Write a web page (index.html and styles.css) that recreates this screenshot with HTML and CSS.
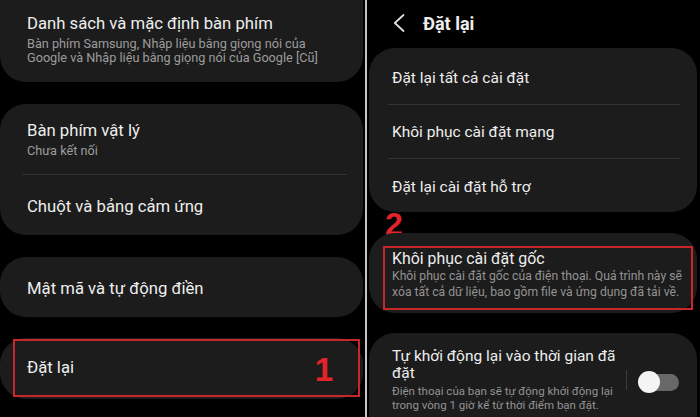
FILE: index.html
```html
<!DOCTYPE html>
<html lang="vi">
<head>
<meta charset="utf-8">
<title>Đặt lại</title>
<link rel="stylesheet" href="styles.css">
</head>
<body>
<div class="screen">
  <div class="panel left">
    <div class="card c1">
      <div class="title">Danh sách và mặc định bàn phím</div>
      <div class="sub">Bàn phím Samsung, Nhập liệu bằng giọng nói của<br>Google và Nhập liệu bằng giọng nói của Google [Cũ]</div>
    </div>
    <div class="card c2">
      <div class="item top-item">
        <div class="title">Bàn phím vật lý</div>
        <div class="sub">Chưa kết nối</div>
      </div>
      <div class="divider ldiv"></div>
      <div class="item single">
        <div class="title">Chuột và bảng cảm ứng</div>
      </div>
    </div>
    <div class="card c3">
      <div class="item single">
        <div class="title">Mật mã và tự động điền</div>
      </div>
    </div>
    <div class="card c4">
      <div class="hl hl1">
        <div class="title">Đặt lại</div>
        <div class="num n1">1</div>
      </div>
    </div>
  </div>
  <div class="sep"></div>
  <div class="panel right">
    <div class="header">
      <svg class="back" width="12" height="18" viewBox="0 0 12 18"><polyline points="10.5,1 1.8,9 10.5,17" fill="none" stroke="#e2e2e2" stroke-width="1.7" stroke-linecap="round" stroke-linejoin="round"/></svg>
      <span class="htitle">Đặt lại</span>
    </div>
    <div class="card ca">
      <div class="row r1"><span class="rtitle">Đặt lại tất cả cài đặt</span></div>
      <div class="divider rdiv"></div>
      <div class="row r2"><span class="rtitle">Khôi phục cài đặt mạng</span></div>
      <div class="divider rdiv"></div>
      <div class="row r3"><span class="rtitle">Đặt lại cài đặt hỗ trợ</span></div>
    </div>
    <div class="num n2">2</div>
    <div class="card cb">
      <div class="hl hl2">
        <div class="rtitle btitle">Khôi phục cài đặt gốc</div>
        <div class="rsub bsub">Khôi phục cài đặt gốc của điện thoại. Quá trình này sẽ<br>xóa tất cả dữ liệu, bao gồm file và ứng dụng đã tải về.</div>
      </div>
    </div>
    <div class="card cc">
      <div class="trow">
        <div class="ttext">
          <div class="rtitle tt">Tự khởi động lại vào thời gian đã<br>đặt</div>
          <div class="rsub ts">Điện thoại của bạn sẽ tự động khởi động lại<br>trong vòng 1 giờ kể từ thời điểm bạn đặt.</div>
        </div>
        <div class="vline"></div>
        <div class="toggle"><span class="track"></span><span class="knob"></span></div>
      </div>
    </div>
  </div>
</div>
</body>
</html>
```
FILE: styles.css
```css
* { box-sizing: border-box; }
html, body { margin: 0; padding: 0; background: #000; }
body { font-family: Roboto, "Noto Sans", "Liberation Sans", sans-serif; color: #ededed; }
.screen { width: 700px; height: 417px; display: flex; overflow: hidden; background: #000; }
.panel { height: 417px; overflow: hidden; display: flex; flex-direction: column; }
.left { width: 365px; }
.sep { width: 2px; height: 417px; background: #c4c4c4; flex: none; }
.right { flex: 1; padding: 0 3px 0 2px; }

.card { background: #1c1c1c; border-radius: 26px; flex: none; }
.left .card { margin-right: 2px; }

.title { font-size: 16.7px; line-height: 22px; color: #eeeeee; }
.sub { font-size: 12.7px; line-height: 14px; color: #9c9c9c; margin-top: 2px; }

.c1 { margin-top: -30px; padding: 43px 20px 17px 27px; }
.c2 { margin-top: 22px; }
.top-item { padding: 16px 27px 16px; }
.ldiv { margin: 0 16px 0 22px; }
.single { padding: 21px 27px 17px; }
.c3 { margin-top: 22px; }
.c4 { margin-top: 21px; padding: 1px 3px 2px 13px; }

.divider { height: 1px; background: #333333; }

.hl { border: 2px solid #c8262c; }
.hl1 { height: 58px; display: flex; align-items: center; justify-content: space-between; padding: 0 25px 0 12px; }
.num { color: #e3232a; font-weight: 700; font-family: "Liberation Sans", Arial, sans-serif; }
.n1 { font-size: 33px; line-height: 33px; padding-top: 2px; }

.header { height: 48px; display: flex; align-items: center; padding-left: 24px; padding-bottom: 2px; flex: none; }
.back { display: block; }
.htitle { margin-left: 18px; font-size: 18px; font-weight: 700; color: #eeeeee; }

.rtitle { font-size: 15.5px; line-height: 20px; color: #eeeeee; }
.rsub { font-size: 11.5px; line-height: 15.5px; color: #939393; }
.btitle { font-size: 15.9px; }
.bsub { font-size: 12.2px; white-space: nowrap; }
.row { display: flex; align-items: center; padding-left: 23px; }
.r1 { height: 56px; padding-top: 3px; }
.r2 { height: 53px; }
.r3 { height: 53px; padding-top: 3px; }
.rdiv { margin: 0 17px 0 19px; }

.n2 { height: 21px; font-size: 32px; line-height: 24px; padding-left: 16px; flex: none; }

.cb { padding: 13px 4px 3px 14px; }
.hl2 { height: 64px; padding: 1px 2px 0 7px; overflow: hidden; }

.cc { margin-top: 20px; flex: 1 0 auto; border-radius: 26px 26px 0 0; padding: 15px 18px 0 23px; }
.trow { display: flex; align-items: flex-start; }
.ttext { width: 234px; }
.tt { line-height: 17px; }
.ts { line-height: 14px; margin-top: 2px; }
.vline { width: 1px; height: 20px; background: #3c3c3c; margin-top: 22px; }
.toggle { position: relative; width: 41px; height: 22px; margin: 23px 0 0 11px; }
.track { position: absolute; left: 3px; top: 3px; width: 38px; height: 17px; border-radius: 9px; background: #686868; }
.knob { position: absolute; left: 0; top: 0; width: 22px; height: 22px; border-radius: 50%; background: #f4f4f4; }
```
